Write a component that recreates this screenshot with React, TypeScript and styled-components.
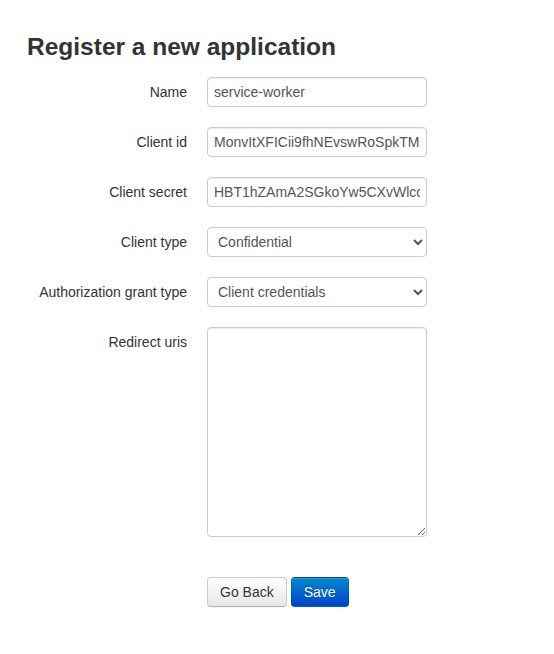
import React from "react";
import styled, { createGlobalStyle } from "styled-components";

const GlobalStyle = createGlobalStyle`
  html, body { margin: 0; padding: 0; background: #fff; }
  body {
    font-family: "Liberation Sans", Arial, Helvetica, sans-serif;
    font-size: 14px;
    line-height: 20px;
    color: #333;
  }
  * { box-sizing: content-box; }
`;

const Container = styled.div`
  padding: 17px 27px 40px 27px;
`;

const Heading = styled.h3`
  margin: 10px 0;
  font-size: 24.5px;
  line-height: 40px;
  font-weight: bold;
  color: #333;
`;

const Form = styled.form`
  margin: 0;
`;

const ControlGroup = styled.div`
  display: flex;
  align-items: flex-start;
  margin-bottom: 20px;
`;

const Label = styled.label`
  width: 160px;
  flex: none;
  padding-top: 5px;
  text-align: right;
  font-size: 14px;
  line-height: 20px;
  color: #333;
`;

const Controls = styled.div`
  margin-left: 20px;
`;

const fieldBase = `
  display: block;
  margin: 0;
  font-family: "Liberation Sans", Arial, Helvetica, sans-serif;
  font-size: 14px;
  line-height: 20px;
  color: #555;
  background-color: #fff;
  border: 1px solid #ccc;
  border-radius: 4px;
  box-shadow: inset 0 1px 1px rgba(0, 0, 0, 0.075);
  outline: none;
`;

const TextInput = styled.input`
  ${fieldBase}
  width: 206px;
  height: 20px;
  padding: 4px 6px;
`;

const Select = styled.select`
  ${fieldBase}
  box-shadow: none;
  box-sizing: border-box;
  width: 220px;
  height: 30px;
  padding: 4px 6px;
`;

const TextArea = styled.textarea`
  ${fieldBase}
  width: 206px;
  height: 200px;
  padding: 4px 6px;
  resize: both;
`;

const Actions = styled.div`
  display: flex;
  gap: 4px;
  margin-top: 40px;
  padding-left: 180px;
`;

const Button = styled.button<{ $primary?: boolean }>`
  display: inline-block;
  margin: 0;
  padding: 4px 12px;
  font-family: "Liberation Sans", Arial, Helvetica, sans-serif;
  font-size: 14px;
  line-height: 20px;
  border-radius: 4px;
  border: 1px solid;
  cursor: pointer;
  box-shadow: inset 0 1px 0 rgba(255, 255, 255, 0.2), 0 1px 2px rgba(0, 0, 0, 0.05);
  ${(p) =>
    p.$primary
      ? `
    color: #fff;
    text-shadow: 0 -1px 0 rgba(0,0,0,0.25);
    background-color: #006dcc;
    background-image: linear-gradient(to bottom, #0088cc, #0044cc);
    border-color: rgba(0,0,0,0.1) rgba(0,0,0,0.1) rgba(0,0,0,0.25);
  `
      : `
    color: #333;
    text-shadow: 0 1px 1px rgba(255,255,255,0.75);
    background-color: #f5f5f5;
    background-image: linear-gradient(to bottom, #ffffff, #e6e6e6);
    border-color: #cccccc #cccccc #b3b3b3;
  `}
`;

export default function App() {
  return (
    <>
      <GlobalStyle />
      <Container>
        <Heading>Register a new application</Heading>
        <Form onSubmit={(e) => e.preventDefault()}>
          <ControlGroup>
            <Label htmlFor="name">Name</Label>
            <Controls>
              <TextInput id="name" type="text" defaultValue="service-worker" />
            </Controls>
          </ControlGroup>
          <ControlGroup>
            <Label htmlFor="client_id">Client id</Label>
            <Controls>
              <TextInput
                id="client_id"
                type="text"
                defaultValue="MonvItXFICii9fhNEvswRoSpkTMq8bXz3hJrLw2d"
              />
            </Controls>
          </ControlGroup>
          <ControlGroup>
            <Label htmlFor="client_secret">Client secret</Label>
            <Controls>
              <TextInput
                id="client_secret"
                type="text"
                defaultValue="HBT1hZAmA2SGkoYw5CXvWlccQ7nPzR4tUe8kVbLm"
              />
            </Controls>
          </ControlGroup>
          <ControlGroup>
            <Label htmlFor="client_type">Client type</Label>
            <Controls>
              <Select id="client_type" defaultValue="confidential">
                <option value="confidential">Confidential</option>
                <option value="public">Public</option>
              </Select>
            </Controls>
          </ControlGroup>
          <ControlGroup>
            <Label htmlFor="grant_type">Authorization grant type</Label>
            <Controls>
              <Select id="grant_type" defaultValue="client-credentials">
                <option value="authorization-code">Authorization code</option>
                <option value="implicit">Implicit</option>
                <option value="password">Resource owner password-based</option>
                <option value="client-credentials">Client credentials</option>
              </Select>
            </Controls>
          </ControlGroup>
          <ControlGroup>
            <Label htmlFor="redirect_uris">Redirect uris</Label>
            <Controls>
              <TextArea id="redirect_uris" rows={10} />
            </Controls>
          </ControlGroup>
          <Actions>
            <Button type="button">Go Back</Button>
            <Button type="submit" $primary>
              Save
            </Button>
          </Actions>
        </Form>
      </Container>
    </>
  );
}
